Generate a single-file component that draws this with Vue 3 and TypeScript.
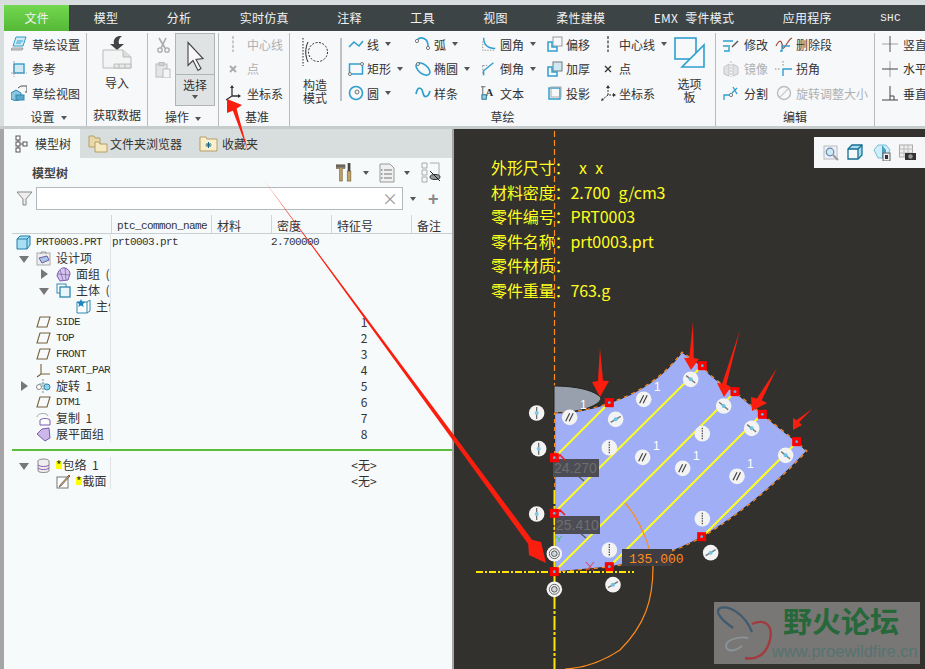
<template>
  <div class="app">
    <div class="topstrip"></div>
    <div class="tabs">
      <div class="tab first">文件</div>
      <div v-for="t in tabs" :key="t" class="tab" :class="{ mono: t === 'SHC', emx: t.startsWith('EMX') }">{{ t }}</div>
    </div>

    <div class="ribbon">
      <!-- 设置 -->
      <section class="group g1">
        <div class="stack">
          <div class="cmd">
            <svg class="ico" viewBox="0 0 16 16"><path d="M5 1h10l-3 9H2z" fill="#cfe8f4" stroke="#2f9fce"/><path d="M1 12h11l-1 2H0z" fill="#ddd" stroke="#777" stroke-width=".7"/><path d="M6 5h6M5 7h5" stroke="#2f9fce"/></svg>
            <span>草绘设置</span>
          </div>
          <div class="cmd">
            <svg class="ico" viewBox="0 0 16 16"><rect x="3" y="3" width="10" height="9" fill="#cfe8f4" stroke="#2f9fce" stroke-width="1.4"/><path d="M0 12h16M3 0v16" stroke="#888" stroke-dasharray="2 1" stroke-width=".7"/></svg>
            <span>参考</span>
          </div>
          <div class="cmd">
            <svg class="ico" viewBox="0 0 16 16"><path d="M0 8l5-3 5 3v6l-5 2-5-2z" fill="#8cc7e2" stroke="#2f87ad"/><rect x="5" y="10" width="8" height="5" fill="#5aa7c9" stroke="#2f87ad"/><path d="M10 1h6v6h-2M7 3l3-2" fill="none" stroke="#555"/></svg>
            <span>草绘视图</span>
          </div>
        </div>
        <div class="label">设置<i class="caret small"></i></div>
      </section>

      <!-- 获取数据 -->
      <section class="group g2">
        <div class="stack center">
          <svg class="bigico" width="30" height="34" viewBox="0 0 30 34"><path d="M17 1c-4 1-6 4-5 8H8l7 6 7-6h-5c-1-3 0-6 3-8z" fill="#444"/><path d="M1 15h20l8 7v11H1z" fill="#f3f4f4" stroke="#bbb"/><path d="M21 15v7h8" fill="#ddd" stroke="#bbb"/><path d="M12 29h17v4H12zM17 29v4M23 29v4" fill="#e7e7e7" stroke="#aaa" stroke-width=".7"/></svg>
          <span class="biglabel">导入</span>
        </div>
        <div class="label">获取数据</div>
      </section>

      <!-- 操作 -->
      <section class="group g3">
        <div class="opsbody">
          <div class="opsicons">
            <svg class="ico" viewBox="0 0 16 16"><path d="M4 1l6 10M11 1L6 11" stroke="#aaa" stroke-width="1.6" fill="none"/><circle cx="5" cy="13" r="2.2" fill="none" stroke="#aaa" stroke-width="1.3"/><circle cx="12" cy="13" r="2.2" fill="none" stroke="#aaa" stroke-width="1.3"/></svg>
            <svg class="ico" viewBox="0 0 16 16"><rect x="1" y="2" width="11" height="13" fill="#e5e5e5" stroke="#bbb"/><rect x="4" y="0.5" width="5" height="3" fill="#d4d4d4" stroke="#bbb"/><path d="M8 7h7v9H8z" fill="#f5f5f5" stroke="#bbb"/></svg>
          </div>
          <div class="selectbtn">
            <svg class="arrowico" width="18" height="30" viewBox="0 0 18 30"><path d="M2 1v23l5-5 5 10 3-2-5-9 7-1z" fill="#f8f8f8" stroke="#444" stroke-width="1.1"/></svg>
            <div class="selectlow"><span>选择</span><i class="caret"></i></div>
          </div>
        </div>
        <div class="label">操作<i class="caret small"></i></div>
      </section>

      <!-- 基准 -->
      <section class="group g4">
        <div class="stack">
          <div class="cmd off">
            <svg class="ico" viewBox="0 0 16 16"><path d="M8 0v16" stroke="#b5b5b5" stroke-width="1.4" stroke-dasharray="3 1.5"/></svg>
            <span>中心线</span>
          </div>
          <div class="cmd off">
            <svg class="ico" viewBox="0 0 16 16"><path d="M5 5l6 6M11 5l-6 6" stroke="#aaa" stroke-width="1.8"/></svg>
            <span>点</span>
          </div>
          <div class="cmd">
            <svg class="ico" viewBox="0 0 16 16"><path d="M7 1v10h8M7 11l-6 4" fill="none" stroke="#333" stroke-width="1.3"/><path d="M7 0l-2 3h4zM16 11l-3-2v4z" fill="#333"/></svg>
            <span>坐标系</span>
          </div>
        </div>
        <div class="label">基准</div>
      </section>

      <!-- 草绘 -->
      <section class="group g5">
        <div class="sketchbody">
          <div class="construct">
            <svg width="28" height="30" viewBox="0 0 28 30"><path d="M2 1v28" stroke="#222" stroke-dasharray="1.5 1.5"/><path d="M7 5c-3 6-3 14 0 20" fill="none" stroke="#222"/><circle cx="17" cy="15" r="9.5" fill="none" stroke="#222" stroke-dasharray="2 1.5"/></svg>
            <span>构造<br />模式</span>
          </div>
          <div class="vsep"></div>
          <div class="sketchgrid">
            <div class="cmd">
              <svg class="ico" viewBox="0 0 16 16"><path d="M1 11l5-5 5 4 4-5" fill="none" stroke="#2f9fce" stroke-width="1.6"/></svg>
              <span>线</span><i class="caret"></i>
            </div>
            <div class="cmd">
              <svg class="ico" viewBox="0 0 16 16"><path d="M2 4c4-4 12-2 11 8" fill="none" stroke="#2f9fce" stroke-width="1.6"/><circle cx="2" cy="5" r="1.6" fill="#fff" stroke="#777"/><circle cx="13" cy="12" r="1.6" fill="#fff" stroke="#777"/></svg>
              <span>弧</span><i class="caret"></i>
            </div>
            <div class="cmd">
              <svg class="ico" viewBox="0 0 18 16"><path d="M3 1c0 8 4 12 13 12" fill="none" stroke="#2f9fce" stroke-width="1.6"/><path d="M2 5v10h13" fill="none" stroke="#888" stroke-dasharray="1.5 1.5"/></svg>
              <span>圆角</span><i class="caret"></i>
            </div>
            <div class="cmd">
              <svg class="ico" viewBox="0 0 16 16"><rect x="6" y="1" width="9" height="9" fill="none" stroke="#999"/><path d="M1 6v9h9v-4H5V6z" fill="none" stroke="#2f9fce" stroke-width="1.5"/></svg>
              <span>偏移</span>
            </div>
            <div class="cmd">
              <svg class="ico" viewBox="0 0 16 16"><path d="M8 0v16" stroke="#333" stroke-dasharray="3 1.5" stroke-width="1.2"/></svg>
              <span>中心线</span><i class="caret"></i>
            </div>

            <div class="cmd">
              <svg class="ico" viewBox="0 0 16 16"><rect x="1.5" y="3" width="13" height="10" fill="none" stroke="#2f9fce" stroke-width="1.5"/><circle cx="14" cy="3" r="1.5" fill="#fff" stroke="#777"/><circle cx="2" cy="13" r="1.5" fill="#fff" stroke="#777"/></svg>
              <span>矩形</span><i class="caret"></i>
            </div>
            <div class="cmd">
              <svg class="ico" viewBox="0 0 16 16"><ellipse cx="8" cy="8" rx="8" ry="4.5" transform="rotate(38 8 8)" fill="none" stroke="#2f9fce" stroke-width="1.6"/><circle cx="3" cy="3" r="1.5" fill="#fff" stroke="#777"/></svg>
              <span>椭圆</span><i class="caret"></i>
            </div>
            <div class="cmd">
              <svg class="ico" viewBox="0 0 18 16"><path d="M2 4h5M2 4v11" fill="none" stroke="#888" stroke-dasharray="2 1.5"/><path d="M3 15v-5L14 1" fill="none" stroke="#2f9fce" stroke-width="1.6"/></svg>
              <span>倒角</span><i class="caret"></i>
            </div>
            <div class="cmd">
              <svg class="ico" viewBox="0 0 16 16"><rect x="6" y="1" width="9" height="9" fill="#cfe8f4" stroke="#777"/><path d="M1 6v9h9v-4H5V6z" fill="none" stroke="#2f9fce" stroke-width="1.5"/></svg>
              <span>加厚</span>
            </div>
            <div class="cmd">
              <svg class="ico" viewBox="0 0 16 16"><path d="M5 5l6 6M11 5l-6 6" stroke="#333" stroke-width="1.3"/></svg>
              <span>点</span>
            </div>

            <div class="cmd">
              <svg class="ico" viewBox="0 0 16 16"><circle cx="8" cy="8" r="6.5" fill="none" stroke="#2f9fce" stroke-width="1.6"/><circle cx="9" cy="7" r="2" fill="#eee" stroke="#777"/></svg>
              <span>圆</span><i class="caret"></i>
            </div>
            <div class="cmd">
              <svg class="ico" viewBox="0 0 16 16"><path d="M1 9c2-9 6-6 7-1s5 5 7-2" fill="none" stroke="#2f9fce" stroke-width="1.7"/></svg>
              <span>样条</span>
            </div>
            <div class="cmd">
              <svg class="ico" viewBox="0 0 18 16"><path d="M0 1h5M2 1v9" stroke="#555"/><text x="5" y="11" class="serifA">A</text><rect x="1" y="10" width="5" height="5" fill="#9cd" stroke="#16708f"/></svg>
              <span>文本</span>
            </div>
            <div class="cmd">
              <svg class="ico" viewBox="0 0 16 16"><rect x="2" y="3" width="11" height="11" fill="none" stroke="#2f9fce" stroke-width="1.5"/><rect x="4" y="2" width="10" height="10" fill="none" stroke="#aaa"/></svg>
              <span>投影</span>
            </div>
            <div class="cmd">
              <svg class="ico" viewBox="0 0 16 16"><path d="M8 2v8h7M8 10l-6 5" fill="none" stroke="#333" stroke-dasharray="2 1"/><path d="M8 0L6 3h4zM16 10l-3-2v4zM1 16l1-3 2 2z" fill="#333"/></svg>
              <span>坐标系</span>
            </div>
          </div>
          <div class="palette">
            <svg width="31" height="31" viewBox="0 0 31 31"><rect x="1" y="1" width="21" height="21" fill="none" stroke="#2f9fce" stroke-width="1.6"/><path d="M30 8v22H8z" fill="#f4fafd" stroke="#2f9fce" stroke-width="1.6"/></svg>
            <span>选项<br />板</span>
          </div>
        </div>
        <div class="label">草绘</div>
      </section>

      <!-- 编辑 -->
      <section class="group g6">
        <div class="editgrid">
          <div class="cmd">
            <svg class="ico" viewBox="0 0 16 16"><path d="M0 5h10M0 10h7M1 15h5v-4" fill="none" stroke="#2f9fce" stroke-width="1.4"/><path d="M9 11l6-6" stroke="#555" stroke-width="1.5"/></svg>
            <span>修改</span>
          </div>
          <div class="cmd">
            <svg class="ico wide" viewBox="0 0 18 16"><path d="M1 10c3-6 5-6 6-2s0 7 4 1 4-6 6-7" fill="none" stroke="#a5483d" stroke-width="1.2"/><path d="M5 15h2v-5h8" fill="none" stroke="#2f9fce" stroke-width="1.4"/></svg>
            <span>删除段</span>
          </div>
          <div class="cmd off">
            <svg class="ico" viewBox="0 0 16 16"><path d="M8 0v16" stroke="#bbb" stroke-dasharray="2 1"/><path d="M6 3L1 6v7l5 2zM10 3l5 3v7l-5 2z" fill="#e2e2e2" stroke="#c4c4c4"/></svg>
            <span>镜像</span>
          </div>
          <div class="cmd">
            <svg class="ico wide" viewBox="0 0 18 16"><path d="M0 8h5M8 0v5" stroke="#888" stroke-dasharray="1.5 1.5"/><path d="M8 15V8h9" fill="none" stroke="#2f9fce" stroke-width="1.4"/></svg>
            <span>拐角</span>
          </div>
          <div class="cmd">
            <svg class="ico" viewBox="0 0 16 16"><path d="M1 15v-5h5M9 8l5-5M10 2l4 7" fill="none" stroke="#2f9fce" stroke-width="1.3"/><circle cx="8" cy="10" r="1.6" fill="#fff" stroke="#777"/></svg>
            <span>分割</span>
          </div>
          <div class="cmd off">
            <svg class="ico wide" viewBox="0 0 18 16"><circle cx="9" cy="8" r="6.5" fill="none" stroke="#bbb" stroke-width="1.4"/><path d="M5 12l8-8" stroke="#ccc" stroke-width="1.3"/></svg>
            <span>旋转调整大小</span>
          </div>
        </div>
        <div class="label">编辑</div>
      </section>

      <!-- 约束 -->
      <section class="group g7">
        <div class="stack">
          <div class="cmd">
            <svg class="ico" viewBox="0 0 16 16"><path d="M0 8h16" stroke="#ccc" stroke-width="2"/><path d="M8 0v16" stroke="#555"/></svg>
            <span>竖直</span>
          </div>
          <div class="cmd">
            <svg class="ico" viewBox="0 0 16 16"><path d="M8 0v16" stroke="#ccc" stroke-width="2"/><path d="M0 8h16" stroke="#444"/></svg>
            <span>水平</span>
          </div>
          <div class="cmd">
            <svg class="ico" viewBox="0 0 16 16"><path d="M0 15h16M8 1v14" stroke="#444"/><path d="M8 11h4v4" fill="none" stroke="#444"/></svg>
            <span>垂直</span>
          </div>
        </div>
      </section>
    </div>
    <div class="ribbonedge"></div>

    <div class="main">
      <aside class="panel">
        <div class="paneltabs">
          <div class="ptab active">
            <svg width="14" height="18" viewBox="0 0 14 18"><path d="M3 5v10M3 9h5" stroke="#555" fill="none"/><rect x="1" y="1" width="4" height="4" fill="#fff" stroke="#555"/><rect x="1" y="7" width="4" height="4" fill="#fff" stroke="#555"/><rect x="1" y="13" width="4" height="4" fill="#fff" stroke="#555"/><rect x="8" y="7" width="4" height="4" fill="#fff" stroke="#555"/></svg>
            <span>模型树</span>
          </div>
          <div class="ptab browser">
            <svg width="20" height="18" viewBox="0 0 20 18"><path d="M1 1h5l1 2h5v9H1z" fill="#e8d9a8" stroke="#b79d66"/><path d="M7 7h4l1 2h7v8H7z" fill="#f7e9bf" stroke="#b79d66"/></svg>
            <span>文件夹浏览器</span>
          </div>
          <div class="ptab fav">
            <svg width="19" height="16" viewBox="0 0 19 16"><path d="M1 1h6l1 2h10v12H1z" fill="#f9efcd" stroke="#b79d66"/><path d="M9.5 6v6M6.5 9h6M7.5 7l4 4M11.5 7l-4 4" stroke="#17688d"/></svg>
            <span>收藏夹</span>
          </div>
        </div>

        <div class="treehead">
          <b>模型树</b>
          <div class="treetools">
            <svg width="18" height="21" viewBox="0 0 20 21"><path d="M0 2h10v4H7v14H4V6H0z" fill="#c2a468" stroke="#6b5a35" stroke-width=".7"/><path d="M0 2h10v3H0z" fill="#666"/><rect x="13" y="0" width="3" height="9" fill="#444"/><rect x="12.5" y="9" width="4" height="11" fill="#c2a468" stroke="#6b5a35" stroke-width=".7"/></svg>
            <i class="caret"></i>
            <svg width="16" height="20" viewBox="0 0 16 20"><path d="M1 1h10l4 4v14H1z" fill="#f0f0f0" stroke="#999"/><path d="M5 7h8M5 11h8M5 15h8" stroke="#777"/><path d="M2 7h1.5M2 11h1.5M2 15h1.5" stroke="#456"/></svg>
            <i class="caret"></i>
            <svg width="21" height="21" viewBox="0 0 21 21"><path d="M2 1h5v5H2zM2 8h5v5H2zM2 15h5v5H2zM10 1h9v16" fill="none" stroke="#aaa"/><ellipse cx="15" cy="15" rx="5" ry="2.5" fill="#999" stroke="#333"/><path d="M10 9l10 10" stroke="#222"/></svg>
          </div>
        </div>

        <div class="filterrow">
          <svg width="17" height="15" viewBox="0 0 17 15"><path d="M1 1h15l-6 7v6H7V8z" fill="#eee" stroke="#888"/></svg>
          <div class="filterinput"><span class="clear">×</span></div>
          <i class="caret"></i>
          <span class="plus">+</span>
        </div>

        <div class="treetable">
          <div class="thead">
            <div class="c1"></div>
            <div class="c2 mono">ptc_common_name</div>
            <div class="c3">材料</div>
            <div class="c4">密度</div>
            <div class="c5">特征号</div>
            <div class="c6">备注</div>
          </div>
          <template v-for="(r, i) in rows" :key="i">
            <div class="trow">
              <div class="c1" :style="{ paddingLeft: r.pad + 'px' }">
                <span v-if="r.level > 0" class="toggle">
                  <i v-if="r.toggle === 'open'" class="tri open"></i>
                  <i v-else-if="r.toggle === 'closed'" class="tri closed"></i>
                </span>
                <svg class="treeico" width="15" height="15" viewBox="0 0 15 15">
                  <template v-if="r.icon === 'part'"><path d="M1 4l3-3h10v9l-3 4H1z" fill="#a9dff5" stroke="#1e7fa8"/><path d="M1 4h10v10M11 4l3-3" fill="none" stroke="#1e7fa8"/></template>
                  <template v-else-if="r.icon === 'design'"><rect x="1" y="2" width="13" height="12" fill="#eee" stroke="#aaa"/><path d="M3 7l8-2 2 4-7 3z" fill="#a9c9e8" stroke="#6a5aa8"/><path d="M5 3V1h5v2" fill="none" stroke="#999"/></template>
                  <template v-else-if="r.icon === 'quilt'"><path d="M1 9C2 3 6 0 9 1s5 3 5 6l-2 6-8 1z" fill="#d4c3ea" stroke="#7a5ab0"/><path d="M4 3l3 10M9 1l1 12M2 7l12 1" stroke="#7a5ab0" stroke-width=".7"/></template>
                  <template v-else-if="r.icon === 'bodies'"><rect x="1" y="1" width="9" height="9" fill="#fff" stroke="#2f87ad"/><rect x="4" y="4" width="10" height="10" fill="#e8f6fc" stroke="#2f87ad" stroke-width="1.3"/></template>
                  <template v-else-if="r.icon === 'body'"><path d="M1 3h10l3-2v11l-3 2H1z" fill="#fff" stroke="#2f87ad"/><path d="M11 3v11" stroke="#2f87ad"/><path d="M5 0l1.3 2.8 3 .3-2.3 2 .7 3L5 6.500 2.300 8.100 3 5.100.700 3.100l3-.300z" fill="#1e86c4"/></template>
                  <template v-else-if="r.icon === 'plane'"><path d="M4 2h10l-3 10H1z" fill="none" stroke="#7a5f3a" stroke-width="1.1"/></template>
                  <template v-else-if="r.icon === 'csys'"><path d="M5 1v10h9M5 11l-4 3" fill="none" stroke="#7a5f3a" stroke-width="1.1"/></template>
                  <template v-else-if="r.icon === 'revolve'"><path d="M7 0v15" stroke="#888" stroke-dasharray="2 1"/><circle cx="3" cy="8" r="2.500" fill="#fff" stroke="#888"/><circle cx="11" cy="8" r="3" fill="#8fd0ec" stroke="#2f87ad"/><path d="M3 5h8" stroke="#7ab"/></template>
                  <template v-else-if="r.icon === 'copy'"><path d="M1 6c0-4 10-5 11-1" fill="none" stroke="#aaa"/><path d="M4 14V9c2-2 8-2 10 0v5z" fill="#fff" stroke="#7a5ab0"/></template>
                  <template v-else-if="r.icon === 'flat'"><path d="M1 7l5-5 7-1 1 10-5 3z" fill="#cbb8e8" stroke="#7a5ab0"/></template>
                  <template v-else-if="r.icon === 'db'"><ellipse cx="7.500" cy="3" rx="5.500" ry="2" fill="#eee" stroke="#888"/><path d="M2 3v10c1 2 10 2 11 0V3" fill="#eee" stroke="#888"/><path d="M2 7c2 2 9 2 11 0M2 10c2 2 9 2 11 0" fill="none" stroke="#8a5ab0"/></template>
                  <template v-else-if="r.icon === 'note'"><rect x="1" y="3" width="11" height="11" fill="#fff" stroke="#777"/><path d="M4 11l9-10 1 1-9 10-2 1z" fill="#c9a46a" stroke="#444" stroke-width=".6"/><path d="M12 1l2 2" stroke="#a33"/></template>
                </svg>
                <span class="tname" :class="{ mono: r.mono }"><em v-if="r.star">*</em>{{ r.name }}</span>
              </div>
              <div class="c2 mono">{{ r.common }}</div>
              <div class="c3"></div>
              <div class="c4 mono">{{ r.density }}</div>
              <div class="c5"><span>{{ r.fid }}</span></div>
              <div class="c6"></div>
            </div>
            <div v-if="r.divider" class="treedivider"></div>
          </template>
        </div>
      </aside>

      <div class="canvas">
        <div class="viewbar">
          <svg width="16" height="16" viewBox="0 0 16 16"><rect x="1" y="1" width="13" height="13" fill="#eef" stroke="#bbb"/><circle cx="7" cy="7" r="3.800" fill="#cfe8f4" stroke="#5f8da3" stroke-width="1.200"/><path d="M10 10l5 5" stroke="#999" stroke-width="2"/></svg>
          <svg width="18" height="17" viewBox="0 0 18 17"><path d="M5 1h10l-4 4H1zM15 1v10l-4 4V5z" fill="#a9dcef"/><path d="M1 5l4-4h10v10l-4 4H1z" fill="none" stroke="#156f94" stroke-width="1.300"/><path d="M1 5h10v10M11 5l4-4" fill="none" stroke="#156f94" stroke-width="1.300"/></svg>
          <svg width="18" height="17" viewBox="0 0 18 17"><path d="M1 6l4-5h8l4 5-4 8H5z" fill="#cdeefa" stroke="#7cbcd6"/><path d="M9 1l4 5v8H9z" fill="#4d9fc4"/><rect x="10" y="9" width="7" height="8" fill="#eee" stroke="#666"/><rect x="12" y="11" width="3" height="4" fill="#333"/></svg>
          <svg width="17" height="17" viewBox="0 0 17 17"><rect x="0.500" y="1" width="13" height="12" fill="#eee" stroke="#aaa"/><path d="M1 5h13M1 9h13M5 1v12M9 1v12" stroke="#bbb"/><rect x="6" y="9" width="11" height="7" fill="#333"/><circle cx="11.500" cy="12.500" r="2.200" fill="#999"/></svg>
        </div>

        <div class="infolist">
          <div v-for="l in infoLines" :key="l">{{ l }}</div>
        </div>

        <svg class="cad" viewBox="454 129 471 540">
          <path d="M554.500 131V386" stroke="#ff8c1a" stroke-dasharray="6 3" stroke-width="1.200"/>

          <path d="M554 386C575 386 595 390 601 398C600 407 575 413 554 413Z" fill="#98a0ad" stroke="#222" stroke-width="1"/>
          <path d="M554 413C575 413 596 408 609 403C640 393 665 375 682 352L702 366C712 378 722 384 735 392L762 414L797 442L807 451C780 480 740 515 702 537C670 555 640 562 609 567L555 572Z" fill="#a0aef5"/>
          <path :d="outline" fill="none" stroke="#2b2b2b" stroke-width="1.200"/>
          <path :d="outline" fill="none" stroke="#ff8c1a" stroke-width="1.200" stroke-dasharray="4 4"/>

          <path d="M476 572H634" stroke="#ffe600" stroke-width="2" stroke-dasharray="7 2 2 2"/>
          <path d="M554.500 490V669" stroke="#ffe600" stroke-width="2" stroke-dasharray="14 2 3 2"/>

          <g stroke="#ffff1e" stroke-width="2">
            <path v-for="(s, i) in hatch" :key="i" :d="s" />
          </g>

          <path d="M625 503C640 520 650 545 653 567C653 600 645 625 620 650C605 660 585 668 565 669" fill="none" stroke="#ff8c1a" stroke-width="1.200"/>

          <g class="dimbox">
            <rect x="553" y="459" width="46" height="18" fill="#4c4c54"/>
            <rect x="555" y="516" width="45" height="18" fill="#4c4c54"/>
            <rect x="622" y="549" width="50" height="17" fill="#3f3d42"/>
            <text x="554" y="473" class="dimtext">24.270</text>
            <text x="556" y="530" class="dimtext">25.410</text>
            <text x="629" y="563" class="dimorange">135.000</text>
            <path d="M578 476l6 5M580 533l6 5" stroke="#5a5a5a" stroke-width="1.400"/>
          </g>

          <g fill="#ff0000">
            <rect v-for="(p, i) in squares" :key="i" :x="p.x - 4.500" :y="p.y - 4.500" width="9" height="9"/>
          </g>
          <g fill="#59b8dc">
            <circle v-for="(p, i) in squares" :key="i" :cx="p.x" :cy="p.y" r="1.400"/>
          </g>
          <path d="M556 459l4-4 5 5M556 514l4-4 5 5" fill="none" stroke="#f01818" stroke-width="1.500"/>
          <path d="M586 562l8 9M594 562l-8 9" stroke="#e83030" stroke-width=".9"/>
          <path d="M556 536l3 3 3-3M559 539v3" stroke="#35d04a" fill="none"/>

          <g v-for="(b, i) in badges" :key="i" :transform="`translate(${b.x} ${b.y})`">
            <circle r="7.800" fill="#f3f3f3"/>
            <template v-if="b.k === 'par'">
              <path d="M-4 4L0 -4M-0.500 4L3.500 -4" stroke="#444" stroke-width="1.200"/>
            </template>
            <template v-else-if="b.k === 'tan'">
              <path d="M-5 3L5 -3" stroke="#777" stroke-width="1.400" :transform="b.flip ? 'rotate(70)' : ''"/>
              <circle r="2" fill="#6cc4e4"/>
            </template>
            <template v-else-if="b.k === 'dots'">
              <path d="M0 -6V6" stroke="#555" stroke-width="1.300" stroke-dasharray="1.500 1"/>
            </template>
            <template v-else-if="b.k === 'vert'">
              <path d="M0 -6V6" stroke="#666" stroke-width="1.200"/>
              <circle r="2" fill="#7cc8e6"/>
            </template>
            <template v-else>
              <circle r="5" fill="none" stroke="#666" stroke-width="1"/>
              <circle r="2.800" fill="#cfd8de" stroke="#555" stroke-width="1"/>
            </template>
          </g>

          <text v-for="(n, i) in numbers" :key="i" :x="n.x" :y="n.y" class="onetext">1</text>

          <g class="logo">
            <rect x="714" y="602" width="206" height="62" fill="#787775"/>
            <path d="M733 628C722 620 714 612 720 608C729 605 745 614 752 632" fill="none" stroke="#3f5a6e" stroke-width="2.200"/>
            <path d="M752 624C766 618 773 626 770 640C766 656 755 660 745 658" fill="none" stroke="#a33a3e" stroke-width="2.400"/>
            <path d="M748 638C738 636 726 640 726 646C727 652 734 652 742 646" fill="none" stroke="#8a9498" stroke-width="1.800"/>
            <text x="783" y="633" class="logocn">野火论坛</text>
            <text x="772" y="657" class="logourl">www.proewildfire.cn</text>
          </g>
        </svg>
      </div>
    </div>

    <!-- 标注箭头，盖在整个界面上面 -->
    <svg class="overlay" viewBox="0 0 925 669">
      <polygon v-for="(a, i) in arrows" :key="i" :points="a" fill="#fa1e0e"/>
    </svg>
  </div>
</template>

<script setup lang="ts">
interface TreeRow {
  level: number
  pad: number
  toggle?: 'open' | 'closed'
  icon: string
  name: string
  mono?: boolean
  star?: boolean
  common?: string
  density?: string
  fid?: string
  divider?: boolean
}

type P = [number, number]

const tabs = ['模型', '分析', '实时仿真', '注释', '工具', '视图', '柔性建模', 'EMX 零件模式', '应用程序', 'SHC']

const infoLines = [
  '外形尺寸： x x',
  '材料密度：2.700 g/cm3',
  '零件编号：PRT0003',
  '零件名称：prt0003.prt',
  '零件材质：',
  '零件重量：763.g',
]

const rows: TreeRow[] = [
  { level: 0, pad: 4, icon: 'part', name: 'PRT0003.PRT', mono: true, common: 'prt0003.prt', density: '2.700000' },
  { level: 1, pad: 4, toggle: 'open', icon: 'design', name: '设计项' },
  { level: 2, pad: 24, toggle: 'closed', icon: 'quilt', name: '面组  (' },
  { level: 2, pad: 24, toggle: 'open', icon: 'bodies', name: '主体  (' },
  { level: 3, pad: 44, icon: 'body', name: '主体' },
  { level: 1, pad: 4, icon: 'plane', name: 'SIDE', mono: true, fid: '1' },
  { level: 1, pad: 4, icon: 'plane', name: 'TOP', mono: true, fid: '2' },
  { level: 1, pad: 4, icon: 'plane', name: 'FRONT', mono: true, fid: '3' },
  { level: 1, pad: 4, icon: 'csys', name: 'START_PART', mono: true, fid: '4' },
  { level: 1, pad: 4, toggle: 'closed', icon: 'revolve', name: '旋转  1', fid: '5' },
  { level: 1, pad: 4, icon: 'plane', name: 'DTM1', mono: true, fid: '6' },
  { level: 1, pad: 4, icon: 'copy', name: '复制  1', fid: '7' },
  { level: 1, pad: 4, icon: 'flat', name: '展平面组', fid: '8', divider: true },
  { level: 1, pad: 4, toggle: 'open', icon: 'db', name: '包络  1', star: true, fid: '<无>' },
  { level: 2, pad: 24, icon: 'note', name: '截面', star: true, fid: '<无>' },
]

// 截图放大图里量的坐标，换算回页面坐标
const z = (x: number, y: number) => ({ x: 520 + x / 3, y: 310 + y / 3 })

const outline =
  'M554 413C575 413 596 408 609 403C640 393 665 375 682 352L702 366C712 378 722 384 735 392L762 414L797 442L807 451C780 480 740 515 702 537C670 555 640 562 609 567L555 572L554.500 413'

const hatch = [
  'M554 458L609 403',
  'M554 513L702 366',
  'M554 572L735 392',
  'M609 567L762 414',
  'M702 537L797 442',
]

const squares = [
  z(268, 278), z(547, 167), z(645, 245), z(727, 313), z(830, 395),
  z(103, 443), z(103, 610), z(103, 785), z(268, 770), z(545, 680),
]

const mark = (k: string, list: number[][], flip = false) =>
  list.map(([x, y]) => ({ ...z(x, y), k, flip }))

const badges = [
  ...mark('par', [[149, 322], [371, 268], [368, 442], [488, 475], [651, 499]]),
  ...mark('tan', [[287, 328], [572, 728], [279, 824]]),
  ...mark('tan', [[512, 208], [611, 288], [695, 355], [797, 436]], true),
  ...mark('dots', [[268, 413], [547, 371], [268, 720], [547, 626]]),
  ...mark('vert', [[50, 309], [56, 416], [50, 612]]),
  ...mark('conc', [[103, 731], [103, 838]]),
]

const numbers = [z(180, 297), z(402, 243), z(399, 420), z(519, 450), z(681, 473)]

// 箭头：细尾巴 -> 收口 -> 倒刺 -> 尖
function dart(tail: P, tip: P, b1: P, b2: P, waist = 0.3): string {
  const mid: P = [(b1[0] + b2[0]) / 2, (b1[1] + b2[1]) / 2]
  const neck = (b: P): P => {
    const back = 0.06
    return [
      mid[0] + (b[0] - mid[0]) * waist + (tail[0] - mid[0]) * back * 0.3,
      mid[1] + (b[1] - mid[1]) * waist + (tail[1] - mid[1]) * back * 0.3,
    ]
  }
  return [tail, neck(b1), b1, tip, b2, neck(b2)].map((p) => p.join(',')).join(' ')
}

const arrows = [
  dart([263, 179], [546, 563], [541, 542], [529, 555], 0.32),
  dart([248, 151], [227, 99], [242, 105], [227, 113], 0.25),
  dart([600, 348], [600, 397], [609, 381], [592, 382]),
  dart([693, 322], [691, 370], [699, 359], [684, 358]),
  dart([740, 330], [724, 397], [731, 387], [717, 383]),
  dart([777, 368], [752, 411], [767, 403], [751, 397]),
  dart([812, 409], [793, 430], [802, 425], [793, 418]),
]
</script>

<style>
html,
body {
  margin: 0;
  background: #33312e;
}
</style>

<style scoped>
.app {
  position: relative;
  width: 925px;
  height: 669px;
  overflow: hidden;
  background: #d8dedd;
  color: #333;
  font: 12px "Noto Sans CJK SC", "Liberation Sans", sans-serif;
}
.mono {
  font-family: "Liberation Mono", "Noto Sans CJK SC", monospace;
}
.topstrip {
  height: 5px;
}
.tabs {
  display: flex;
  height: 26px;
  margin-left: 4px;
  background: #3c4446;
  color: #f2f2f2;
  font-size: 12px;
  letter-spacing: 0.25px;
}
.tab {
  padding: 0 24.25px;
  line-height: 26px;
  white-space: nowrap;
}
.tab.first {
  width: 66px;
  box-sizing: border-box;
  padding: 0;
  text-align: center;
  background: linear-gradient(#72d84e, #55b838);
}
.tab.mono {
  font-size: 11px;
}
.tab.emx {
  word-spacing: 4px;
}

.ribbon {
  display: flex;
  height: 95px;
  margin-left: 4px;
  background: #f6f8fa;
}
.ribbonedge {
  height: 3px;
  background: #c6cccc;
}
.group {
  display: flex;
  flex-direction: column;
  box-sizing: border-box;
  height: 93px;
  margin-top: 2px;
  border-right: 1px solid #b8bcbe;
}
.label {
  height: 22px;
  line-height: 21px;
  text-align: center;
  white-space: nowrap;
}
.stack {
  display: flex;
  flex-direction: column;
  flex: 1;
  margin-top: -1px;
}
.stack.center {
  align-items: center;
}
.cmd {
  display: flex;
  align-items: center;
  height: 24.5px;
  white-space: nowrap;
}
.cmd .ico {
  flex: none;
  margin-right: 5px;
}
.cmd.off {
  color: #aeb0b2;
}
.ico {
  width: 16px;
  height: 16px;
}
.ico.wide {
  width: 18px;
  margin-right: 3px;
}
.caret {
  display: inline-block;
  width: 0;
  height: 0;
  margin-left: 6px;
  border: 3.5px solid transparent;
  border-top: 4px solid #555;
  border-bottom: 0;
  vertical-align: middle;
}
.g1 {
  width: 83px;
  padding-left: 7px;
}
.g2 {
  width: 61px;
}
.bigico {
  margin-top: 3px;
}
.biglabel {
  margin-top: 5px;
}
.g3 {
  width: 71px;
}
.opsbody {
  display: flex;
  flex: 1;
  padding-left: 7px;
}
.opsicons {
  display: flex;
  flex-direction: column;
  gap: 9px;
  padding-top: 4px;
}
.selectbtn {
  display: flex;
  flex-direction: column;
  align-items: center;
  box-sizing: border-box;
  width: 40px;
  height: 73px;
  margin-left: 4px;
  background: #dfe3e3;
  border: 1px solid #b0b4b4;
}
.arrowico {
  margin-top: 6px;
  height: 33px;
}
.selectlow {
  display: flex;
  flex-direction: column;
  align-items: center;
  align-self: stretch;
  margin-top: 1px;
  padding-top: 1px;
  border-top: 1px solid #b0b4b4;
  line-height: 17px;
}
.selectlow .caret {
  margin: 2px 0 0;
}
.g4 {
  width: 71px;
  padding-left: 6px;
}
.g4 .ico {
  margin-right: 6px;
}
.g5 {
  width: 426px;
}
.sketchbody {
  display: flex;
  flex: 1;
}
.construct {
  display: flex;
  flex-direction: column;
  align-items: center;
  width: 50px;
  padding-top: 4px;
  line-height: 13px;
}
.construct span {
  margin-top: 11px;
  text-align: center;
}
.vsep {
  width: 2px;
  height: 63px;
  margin-top: 5px;
  background: #bfc2c4;
}
.sketchgrid {
  display: grid;
  grid-template-columns: 67px 66px 66px 53px 73px;
  grid-auto-rows: 24.5px;
  margin: -1px 0 0 6px;
}
.sketchgrid .ico {
  margin-right: 3px;
}
.palette {
  display: flex;
  flex-direction: column;
  align-items: center;
  width: 41px;
  margin-left: -4px;
  padding-top: 4px;
  line-height: 13px;
}
.palette span {
  margin-top: 9px;
  text-align: center;
}
.g6 {
  width: 159px;
}
.editgrid {
  display: grid;
  flex: 1;
  grid-template-columns: 52px 1fr;
  grid-auto-rows: 24.5px;
  margin-top: -1px;
  padding-left: 7px;
}
.g7 {
  flex: 1;
  padding-left: 7px;
  border-right: 0;
  overflow: hidden;
}

.main {
  display: flex;
  height: 540px;
  background: #a5a5a5;
  padding-left: 4px;
}
.panel {
  width: 448px;
  flex: none;
  background: #f7fafb;
}
.paneltabs {
  display: flex;
  height: 29px;
  background: #d8dedd;
}
.ptab {
  display: flex;
  align-items: center;
  gap: 6px;
}
.ptab.active {
  width: 76px;
  padding-left: 11px;
  box-sizing: border-box;
  background: #f7fafb;
}
.browser {
  margin-left: 8px;
  gap: 2px;
}
.fav {
  margin-left: 17px;
  gap: 4px;
}
.treehead {
  display: flex;
  justify-content: space-between;
  align-items: center;
  height: 29px;
  padding: 0 11px 0 28px;
}
.treehead b {
  color: #444;
}
.treetools {
  display: flex;
  align-items: center;
}
.treetools .caret {
  margin: 0 10px 0 9px;
}
.filterrow {
  display: flex;
  align-items: center;
  height: 23px;
  padding-left: 12px;
}
.filterinput {
  position: relative;
  box-sizing: border-box;
  width: 367px;
  height: 23px;
  margin-left: 3px;
  background: #fff;
  border: 1px solid #b4b8ba;
}
.clear {
  position: absolute;
  right: 4px;
  top: 0;
  color: #999;
  font-size: 16px;
  line-height: 21px;
}
.filterrow .caret {
  margin-left: 7px;
}
.plus {
  margin-left: 12px;
  color: #888;
  font: bold 18px/20px "Liberation Sans", sans-serif;
}
.treetable {
  margin: 5px 0 0 8px;
}
.thead,
.trow {
  display: grid;
  grid-template-columns: 99px 100px 60px 60px 80px 1fr;
}
.thead {
  height: 18px;
  line-height: 22px;
  border-bottom: 1px solid #c9cfd2;
}
.thead > div {
  box-sizing: border-box;
  height: 18px;
  padding-left: 5px;
  border-left: 1px solid #d0d5d8;
  white-space: nowrap;
  overflow: hidden;
}
.thead .c1 {
  border-left: 0;
}
.thead .c2,
.trow .c2,
.trow .c4,
.tname.mono {
  font-size: 11px;
  letter-spacing: -0.6px;
}
.trow {
  height: 16px;
  line-height: 16px;
}
.trow .c1 {
  display: flex;
  align-items: center;
  box-sizing: border-box;
  overflow: hidden;
  white-space: nowrap;
  border-right: 1px solid #dfe3e6;
}
.trow .c2 {
  padding-left: 1px;
}
.trow .c5 {
  width: 66px;
  text-align: center;
}
.toggle {
  flex: none;
  width: 20px;
}
.tri {
  display: block;
  width: 0;
  height: 0;
  border: 5px solid transparent;
}
.tri.open {
  margin: 3px 0 0 3px;
  border-top: 7px solid #777;
  border-bottom: 0;
}
.tri.closed {
  margin-left: 5px;
  border-left: 7px solid #777;
  border-right: 0;
}
.treeico {
  flex: none;
  margin-right: 5px;
}
.tname {
  white-space: pre;
}
.tname em {
  display: inline-block;
  height: 8px;
  margin-right: 1px;
  color: #333;
  background: #ffff00;
  font-style: normal;
  line-height: 8px;
}
.treedivider {
  height: 2px;
  margin: 7px 0 6px;
  background: #5cbd3c;
}

.canvas {
  position: relative;
  flex: 1;
  margin-left: 2px;
  background: #33312e;
}
.cad {
  position: absolute;
  inset: 0;
  width: 471px;
  height: 540px;
}
.viewbar {
  position: absolute;
  z-index: 1;
  left: 360px;
  top: 8px;
  display: flex;
  align-items: center;
  gap: 8px;
  width: 111px;
  height: 31px;
  box-sizing: border-box;
  padding-left: 9px;
  background: #f5f7f8;
}
.infolist {
  position: absolute;
  z-index: 1;
  left: 37px;
  top: 26px;
  color: #ffff1e;
  font-size: 16px;
  letter-spacing: -0.1px;
  word-spacing: 5px;
  line-height: 24.500px;
  white-space: pre;
}
.dimtext {
  fill: #6e6e70;
  font-size: 14px;
  font-family: "Liberation Sans", sans-serif;
}
.dimorange {
  fill: #ff8c1a;
  font-size: 13px;
  font-family: "Liberation Mono", monospace;
}
.onetext {
  fill: #fff;
  font-size: 12px;
  font-family: "Liberation Sans", sans-serif;
}
.serifA {
  fill: #333;
  font: bold 12px "Liberation Serif", serif;
}
.logocn {
  fill: #26683a;
  font-size: 29px;
  font-weight: 700;
  font-family: "Noto Sans CJK SC", sans-serif;
}
.logourl {
  fill: #557370;
  font-size: 16.500px;
  font-family: "Liberation Sans", sans-serif;
}
.overlay {
  position: absolute;
  inset: 0;
  width: 925px;
  height: 669px;
  pointer-events: none;
}
</style>
